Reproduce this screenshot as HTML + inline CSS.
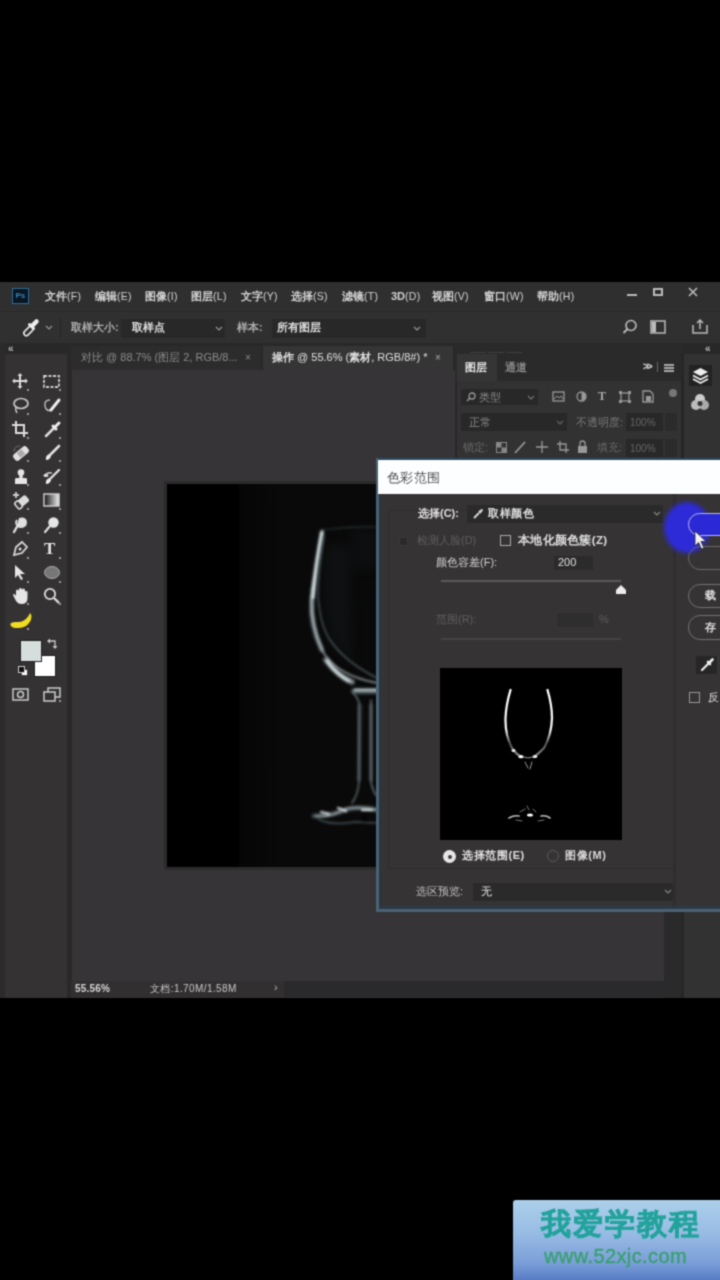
<!DOCTYPE html>
<html><head><meta charset="utf-8">
<style>
*{margin:0;padding:0;box-sizing:border-box}
html,body{width:720px;height:1280px;background:#000;overflow:hidden;font-family:"Liberation Sans",sans-serif;position:relative}
.a{position:absolute}
.t{position:absolute;white-space:nowrap;color:#cfcfcf;font-size:11px;line-height:13px;font-weight:500}
.d{color:#6a6a6a}
svg{position:absolute;overflow:visible}
#wrap{position:absolute;left:0;top:0;width:724px;height:1284px;filter:url(#soft)}
</style></head><body><svg width="0" height="0" style="position:absolute"><filter id="soft" x="0" y="0" width="100%" height="100%" color-interpolation-filters="sRGB"><feConvolveMatrix order="3" kernelMatrix="0.04 0.12 0.04 0.12 0.36 0.12 0.04 0.12 0.04" edgeMode="duplicate"/></filter></svg><div id="wrap">
<!-- ===== PS window ===== -->
<div class="a" style="left:0;top:282px;width:724px;height:716px;background:#313131"></div>
<!-- menu bar -->
<div class="a" style="left:0;top:282px;width:724px;height:30px;background:#2f2f2f"></div>
<div class="a" style="left:0;top:311px;width:724px;height:1px;background:#2a2a2a"></div>
<!-- ps logo -->
<div class="a" style="left:12px;top:288px;width:17px;height:16px;background:#0a1622;border:1.5px solid #2a6d98"></div>
<div class="t" style="left:15.5px;top:291px;font-size:8px;line-height:10px;color:#3584b8;font-weight:bold">Ps</div>
<div class="t" style="left:45px;top:290px;font-weight:bold;color:#d4d4d4">文件<span style="font-size:10.5px;font-weight:normal;letter-spacing:0.3px">(F)</span></div>
<div class="t" style="left:95px;top:290px;font-weight:bold;color:#d4d4d4">编辑<span style="font-size:10.5px;font-weight:normal;letter-spacing:0.3px">(E)</span></div>
<div class="t" style="left:145px;top:290px;font-weight:bold;color:#d4d4d4">图像<span style="font-size:10.5px;font-weight:normal;letter-spacing:0.3px">(I)</span></div>
<div class="t" style="left:191px;top:290px;font-weight:bold;color:#d4d4d4">图层<span style="font-size:10.5px;font-weight:normal;letter-spacing:0.3px">(L)</span></div>
<div class="t" style="left:241px;top:290px;font-weight:bold;color:#d4d4d4">文字<span style="font-size:10.5px;font-weight:normal;letter-spacing:0.3px">(Y)</span></div>
<div class="t" style="left:291px;top:290px;font-weight:bold;color:#d4d4d4">选择<span style="font-size:10.5px;font-weight:normal;letter-spacing:0.3px">(S)</span></div>
<div class="t" style="left:342px;top:290px;font-weight:bold;color:#d4d4d4">滤镜<span style="font-size:10.5px;font-weight:normal;letter-spacing:0.3px">(T)</span></div>
<div class="t" style="left:391px;top:290px;font-weight:bold;color:#d4d4d4">3D<span style="font-size:10.5px;font-weight:normal;letter-spacing:0.3px">(D)</span></div>
<div class="t" style="left:432px;top:290px;font-weight:bold;color:#d4d4d4">视图<span style="font-size:10.5px;font-weight:normal;letter-spacing:0.3px">(V)</span></div>
<div class="t" style="left:484px;top:290px;font-weight:bold;color:#d4d4d4">窗口<span style="font-size:10.5px;font-weight:normal;letter-spacing:0.3px">(W)</span></div>
<div class="t" style="left:537px;top:290px;font-weight:bold;color:#d4d4d4">帮助<span style="font-size:10.5px;font-weight:normal;letter-spacing:0.3px">(H)</span></div>
<!-- window controls -->
<div class="a" style="left:627px;top:294px;width:10px;height:2px;background:#bbb"></div>
<div class="a" style="left:653px;top:288px;width:10px;height:8px;border:2px solid #bbb"></div>
<svg style="left:688px;top:287px" width="10" height="10"><path d="M1 1L9 9M9 1L1 9" stroke="#bbb" stroke-width="1.6"/></svg>

<!-- options bar -->
<div class="a" style="left:0;top:312px;width:724px;height:31px;background:#303030"></div>
<svg style="left:20px;top:316px" width="22" height="22"><rect x="3" y="12.5" width="11" height="5" rx="2.5" transform="rotate(-45 8.5 15)" stroke="#e8e8e8" stroke-width="1.6" fill="none"/><path d="M12.5 9.5 L16.5 5.5" stroke="#eee" stroke-width="4.5" stroke-linecap="round"/><path d="M9.5 8.5 L13.5 12.5" stroke="#eee" stroke-width="3" stroke-linecap="round"/></svg>
<svg style="left:45px;top:325px" width="8" height="6"><path d="M1 1 L4 4 L7 1" stroke="#999" stroke-width="1.2" fill="none"/></svg>
<div class="a" style="left:60px;top:318px;width:1px;height:20px;background:#262626"></div>
<div class="t" style="left:71px;top:321px;color:#b0b0b0;font-weight:bold">取样大小:</div>
<div class="a" style="left:121px;top:319px;width:104px;height:19px;background:#282828"></div>
<div class="t" style="left:132px;top:321px;font-weight:bold;color:#e0e0e0">取样点</div>
<svg style="left:215px;top:326px" width="8" height="6"><path d="M1 1 L4 4 L7 1" stroke="#999" stroke-width="1.2" fill="none"/></svg>
<div class="t" style="left:237px;top:321px;color:#b0b0b0;font-weight:bold">样本:</div>
<div class="a" style="left:272px;top:319px;width:154px;height:19px;background:#282828"></div>
<div class="t" style="left:277px;top:321px;font-weight:bold;color:#e0e0e0">所有图层</div>
<svg style="left:413px;top:326px" width="8" height="6"><path d="M1 1 L4 4 L7 1" stroke="#999" stroke-width="1.2" fill="none"/></svg>
<svg style="left:622px;top:319px" width="16" height="16"><circle cx="9" cy="6.5" r="5" stroke="#bbb" stroke-width="1.6" fill="none"/><path d="M5.5 10 L1.5 14" stroke="#bbb" stroke-width="1.8"/></svg>
<svg style="left:650px;top:320px" width="16" height="14"><rect x="1" y="1" width="14" height="12" stroke="#bbb" stroke-width="1.5" fill="none"/><rect x="2" y="2" width="4" height="10" fill="#bbb"/></svg>
<svg style="left:692px;top:318px" width="16" height="17"><path d="M1 7 V15 H15 V7" stroke="#bbb" stroke-width="1.5" fill="none"/><path d="M8 11 V2 M5 5 L8 2 L11 5" stroke="#bbb" stroke-width="1.5" fill="none"/></svg>

<!-- panel header strip (<<) -->
<div class="a" style="left:0;top:343px;width:724px;height:27px;background:#282828"></div>
<div class="t" style="left:8px;top:342px;font-size:10px;color:#bbb;font-weight:bold">«</div>
<div class="t" style="left:705px;top:342px;font-size:10px;color:#bbb;font-weight:bold">«</div>

<!-- left gutter + tools panel -->
<div class="a" style="left:0;top:343px;width:5px;height:655px;background:#2c2b2c"></div>
<div class="a" style="left:5px;top:354px;width:63px;height:644px;background:#343233"></div>
<div class="a" style="left:67px;top:354px;width:5px;height:644px;background:#2a2829"></div>


<!-- tools icons -->
<svg style="left:0;top:0" width="1" height="1"></svg>
<svg style="left:12px;top:373px" width="16" height="16"><path d="M8 1V15M1 8H15" stroke="#ddd" stroke-width="2"/><path d="M8 0L5.5 3H10.5ZM8 16L5.5 13H10.5ZM0 8L3 5.5V10.5ZM16 8L13 5.5V10.5Z" fill="#ddd"/></svg>
<svg style="left:43px;top:375px" width="17" height="13"><rect x="1" y="1" width="15" height="11" stroke="#ccc" stroke-width="1.8" stroke-dasharray="3 1.5" fill="none"/></svg>
<svg style="left:12px;top:397px" width="17" height="17"><ellipse cx="9" cy="6.5" rx="7" ry="5" stroke="#ccc" stroke-width="1.7" fill="none"/><path d="M4 10 Q3 13 5 16" stroke="#ccc" stroke-width="1.5" fill="none"/></svg>
<svg style="left:43px;top:397px" width="18" height="17"><path d="M7 3 Q1 3 2 9 Q3 15 9 13" stroke="#bbb" stroke-width="1.5" fill="none"/><path d="M8 13 L16 3" stroke="#eee" stroke-width="3" stroke-linecap="round"/></svg>
<svg style="left:12px;top:421px" width="16" height="16"><path d="M4 0V12H16M0 4H12V16" stroke="#ddd" stroke-width="2" fill="none"/></svg>
<svg style="left:43px;top:420px" width="18" height="18"><path d="M3 16 L11 8" stroke="#ddd" stroke-width="2.5" stroke-linecap="round"/><path d="M10 6 L13 9 M12 7 L16 3" stroke="#eee" stroke-width="3" stroke-linecap="round"/></svg>
<svg style="left:12px;top:445px" width="18" height="17"><g transform="rotate(-40 9 8.5)"><rect x="0.5" y="4.5" width="17" height="8" rx="3" fill="#e0e0e0"/><rect x="6" y="5.5" width="6" height="6" fill="#aaa"/></g><path d="M2 6 Q3 1 8 1" stroke="#999" stroke-width="1" stroke-dasharray="1.5 1" fill="none"/></svg>
<svg style="left:43px;top:444px" width="18" height="18"><path d="M3 16 Q2 12 6 10 L8 12 Q7 16 3 16Z" fill="#eee"/><path d="M7 11 L16 2" stroke="#e0e0e0" stroke-width="2.6" stroke-linecap="round"/></svg>
<svg style="left:13px;top:468px" width="16" height="18"><circle cx="8" cy="4.5" r="3.3" fill="#e6e6e6"/><rect x="6.3" y="6" width="3.4" height="5" fill="#e6e6e6"/><path d="M2 11 Q2 10 4 10 H12 Q14 10 14 11 V16 H2Z" fill="#e6e6e6"/></svg>
<svg style="left:43px;top:468px" width="18" height="18"><path d="M3 16 Q2 12 6 10 L8 12 Q7 16 3 16Z" fill="#eee"/><path d="M7 11 L16 2" stroke="#e0e0e0" stroke-width="2.4" stroke-linecap="round"/><path d="M1 8 Q4 4 9 5" stroke="#ccc" stroke-width="1.5" fill="none"/><ellipse cx="3" cy="7.5" rx="2.5" ry="1.5" fill="#ddd"/></svg>
<svg style="left:11px;top:491px" width="19" height="18"><path d="M2 4 H8 M5 1 V7" stroke="#ccc" stroke-width="1.8"/><g transform="rotate(-40 11 11)"><rect x="4" y="7" width="14" height="8" rx="2" fill="#dcdcdc"/><rect x="4" y="7" width="5" height="8" rx="2" fill="#3a3a3a" stroke="#dcdcdc" stroke-width="1.6"/></g></svg>
<svg style="left:43px;top:493px" width="17" height="14"><defs><linearGradient id="gr"><stop offset="0" stop-color="#111"/><stop offset="1" stop-color="#eee"/></linearGradient></defs><rect x="1" y="1" width="15" height="12" fill="url(#gr)" stroke="#ccc" stroke-width="1.5"/></svg>
<svg style="left:12px;top:516px" width="17" height="17"><path d="M7 2 Q14 0 15 6 Q15 12 8 12 Q6 12 5 10 Z" fill="#e0e0e0"/><path d="M6 9 L2 16" stroke="#ddd" stroke-width="2.4" stroke-linecap="round"/><path d="M5 4 Q3 7 6 10" stroke="#e0e0e0" stroke-width="2" fill="none"/></svg>
<svg style="left:43px;top:516px" width="17" height="17"><circle cx="10.5" cy="6.5" r="5.2" fill="#e6e6e6"/><path d="M7 10 L2 16" stroke="#ddd" stroke-width="2.2" stroke-linecap="round"/></svg>
<svg style="left:12px;top:540px" width="17" height="17"><path d="M2 15 L4 7 L10 2 L15 7 L10 13 Z" stroke="#ddd" stroke-width="1.7" fill="none"/><circle cx="8" cy="9" r="1.5" fill="#ddd"/></svg>
<div class="t" style="left:44px;top:540px;font-size:17px;line-height:18px;color:#e6e6e6;font-weight:bold;font-family:'Liberation Serif',serif">T</div>
<svg style="left:13px;top:564px" width="15" height="17"><path d="M2 1 L2 14 L5 11 L8 16 L10 15 L7 10 L12 10 Z" fill="#e6e6e6"/></svg>
<svg style="left:43px;top:565px" width="18" height="15"><ellipse cx="9" cy="7.5" rx="7.5" ry="6" fill="#777" stroke="#aaa" stroke-width="1"/></svg>
<svg style="left:12px;top:587px" width="18" height="18"><path d="M4 9 V4 Q4 2.5 5.5 2.5 Q7 2.5 7 4 V8 V2.5 Q7 1 8.5 1 Q10 1 10 2.5 V8 V3 Q10 1.5 11.5 1.5 Q13 1.5 13 3 V9 V5 Q13 4 14.3 4 Q15.5 4 15.5 5 V11 Q15.5 17 9.5 17 Q5 17 3 12 L1 8 Q1.5 6.5 3 7.5 Z" fill="#e6e6e6"/></svg>
<svg style="left:43px;top:587px" width="17" height="17"><circle cx="7" cy="7" r="5.2" stroke="#ddd" stroke-width="1.8" fill="none"/><path d="M11 11 L16 16" stroke="#ddd" stroke-width="2.4"/></svg>
<svg style="left:9px;top:611px" width="24" height="18"><path d="M1.5 12.5 Q3 10.5 8 11 Q15 11.5 19.5 5 Q20.5 3 21 2 Q22.5 3 22.5 6 Q22 12 16 15.5 Q10 18 4 16.5 Q1 15 1.5 12.5Z" fill="#efdd22"/></svg>
<!-- swatches -->
<div class="a" style="left:34px;top:655px;width:22px;height:22px;background:#fff;border:1px solid #222"></div>
<div class="a" style="left:20px;top:640px;width:22px;height:22px;background:#d6dedd;border:1px solid #222"></div>
<svg style="left:47px;top:638px" width="11" height="11"><path d="M2 3 H8 V9" stroke="#ccc" stroke-width="1.3" fill="none"/><path d="M0 3 L3 0.5 V5.5Z M8 11 L5.5 8 H10.5Z" fill="#ccc"/></svg>
<div class="a" style="left:21px;top:669px;width:7px;height:7px;background:#fff;border:1px solid #444"></div>
<div class="a" style="left:18px;top:666px;width:7px;height:7px;background:#111;border:1px solid #ccc"></div>
<!-- quick mask / screen mode -->
<svg style="left:12px;top:688px" width="17" height="13"><rect x="1" y="1" width="15" height="11" stroke="#ccc" stroke-width="1.5" fill="none"/><circle cx="8.5" cy="6.5" r="3" stroke="#ccc" stroke-width="1.5" fill="none"/></svg>
<svg style="left:43px;top:687px" width="18" height="15"><rect x="5" y="1" width="12" height="9" stroke="#ccc" stroke-width="1.5" fill="none"/><rect x="1" y="5" width="11" height="9" stroke="#ccc" stroke-width="1.5" fill="#323232"/></svg>
<div class="a" style="left:27px;top:389px;width:2px;height:2px;background:#999"></div><div class="a" style="left:59px;top:389px;width:2px;height:2px;background:#999"></div><div class="a" style="left:27px;top:413px;width:2px;height:2px;background:#999"></div><div class="a" style="left:59px;top:413px;width:2px;height:2px;background:#999"></div><div class="a" style="left:27px;top:437px;width:2px;height:2px;background:#999"></div><div class="a" style="left:59px;top:437px;width:2px;height:2px;background:#999"></div><div class="a" style="left:27px;top:460px;width:2px;height:2px;background:#999"></div><div class="a" style="left:59px;top:460px;width:2px;height:2px;background:#999"></div><div class="a" style="left:27px;top:484px;width:2px;height:2px;background:#999"></div><div class="a" style="left:59px;top:484px;width:2px;height:2px;background:#999"></div><div class="a" style="left:27px;top:508px;width:2px;height:2px;background:#999"></div><div class="a" style="left:59px;top:508px;width:2px;height:2px;background:#999"></div><div class="a" style="left:27px;top:532px;width:2px;height:2px;background:#999"></div><div class="a" style="left:59px;top:532px;width:2px;height:2px;background:#999"></div><div class="a" style="left:27px;top:557px;width:2px;height:2px;background:#999"></div><div class="a" style="left:59px;top:557px;width:2px;height:2px;background:#999"></div><div class="a" style="left:27px;top:581px;width:2px;height:2px;background:#999"></div><div class="a" style="left:59px;top:581px;width:2px;height:2px;background:#999"></div><div class="a" style="left:27px;top:603px;width:2px;height:2px;background:#999"></div><div class="a" style="left:59px;top:603px;width:2px;height:2px;background:#999"></div><div class="a" style="left:27px;top:628px;width:2px;height:2px;background:#999"></div><div class="a" style="left:59px;top:700px;width:2px;height:2px;background:#999"></div>
<!-- tabs -->
<div class="a" style="left:71px;top:346px;width:190px;height:24px;background:#2c2c2c"></div>
<div class="t" style="left:81px;top:351px;color:#8c8c8c">对比 @ 88.7% (图层 2, RGB/8...</div>
<div class="t" style="left:245px;top:351px;color:#8c8c8c;font-size:10px">×</div>
<div class="a" style="left:263px;top:346px;width:190px;height:24px;background:#353535"></div>
<div class="t" style="left:272px;top:351px;color:#e0e0e0"><b>操作</b> @ 55.6% (<b>素材</b>, RGB/8#) *</div>
<div class="t" style="left:435px;top:351px;color:#aaa;font-size:10px">×</div>

<!-- canvas -->
<div class="a" style="left:72px;top:370px;width:592px;height:611px;background:#363436"></div>
<!-- vertical scrollbar area -->
<div class="a" style="left:664px;top:370px;width:17px;height:628px;background:#2a2a2a"></div>
<div class="a" style="left:681px;top:354px;width:3px;height:644px;background:#262626"></div>
<!-- right icon dock -->
<div class="a" style="left:684px;top:354px;width:40px;height:644px;background:#323232"></div>
<!-- status bar -->
<div class="a" style="left:71px;top:981px;width:213px;height:16px;background:#322f31"></div>
<div class="a" style="left:284px;top:981px;width:380px;height:16px;background:#2a292b"></div>
<div class="t" style="left:75px;top:982px;font-size:10px;font-weight:bold;color:#d6d6d6;letter-spacing:0.2px">55.56%</div>
<div class="t" style="left:150px;top:982px;font-size:10px;color:#c8c8c8;letter-spacing:0.4px">文档:1.70M/1.58M</div>
<div class="t" style="left:274px;top:981px;font-size:11px;color:#bbb">›</div>

<!-- document image -->
<div class="a" style="left:164px;top:481px;width:220px;height:389px;background:#2c2b2c"></div>
<div class="a" style="left:167px;top:484px;width:215px;height:383px;background:#000"></div>
<div class="a" style="left:239px;top:484px;width:143px;height:383px;background:linear-gradient(90deg,#050505,#090909 30%,#090909)"></div>


<!-- layers panel -->
<div class="a" style="left:455px;top:344px;width:226px;height:130px;background:#2a2a2a"></div>
<div class="t" style="left:470px;top:345px;font-size:8px;color:#555">—— ——  ——</div>
<div class="a" style="left:456px;top:354px;width:225px;height:120px;background:#323232;border-left:1px solid #262626"></div>
<div class="a" style="left:456px;top:354px;width:225px;height:27px;background:#2a2a2a"></div>
<div class="a" style="left:457px;top:354px;width:40px;height:27px;background:#353535"></div>
<div class="t" style="left:465px;top:361px;color:#e6e6e6;font-weight:bold">图层</div>
<div class="t" style="left:505px;top:361px;color:#8a8a8a;font-weight:bold">通道</div>
<div class="t" style="left:643px;top:360px;color:#ddd;font-size:10px;font-weight:bold;letter-spacing:-2px">&gt;&gt;</div>
<div class="a" style="left:657px;top:362px;width:1px;height:10px;background:#666"></div>
<div class="a" style="left:664px;top:364px;width:10px;height:1.5px;background:#aaa"></div>
<div class="a" style="left:664px;top:367px;width:10px;height:1.5px;background:#aaa"></div>
<div class="a" style="left:664px;top:370px;width:10px;height:1.5px;background:#aaa"></div>
<div class="a" style="left:461px;top:389px;width:77px;height:16px;background:#282828"></div>
<svg style="left:466px;top:392px" width="10" height="10"><circle cx="6" cy="4" r="3" stroke="#999" stroke-width="1.3" fill="none"/><path d="M4 6 L1 9" stroke="#999" stroke-width="1.4"/></svg>
<div class="t" style="left:479px;top:391px;color:#8a8a8a">类型</div>
<svg style="left:527px;top:395px" width="8" height="6"><path d="M1 1 L4 4 L7 1" stroke="#777" stroke-width="1.1" fill="none"/></svg>
<svg style="left:552px;top:391px" width="13" height="11"><rect x="1" y="1" width="11" height="9" stroke="#999" stroke-width="1.3" fill="none"/><path d="M2 8 L5 5 L7 7 L9 5 L11 8" stroke="#999" stroke-width="1" fill="none"/></svg>
<svg style="left:576px;top:391px" width="11" height="11"><circle cx="5.5" cy="5.5" r="4.5" stroke="#999" stroke-width="1.3" fill="none"/><path d="M5.5 1 A4.5 4.5 0 0 1 5.5 10Z" fill="#999"/></svg>
<div class="t" style="left:598px;top:390px;color:#aaa;font-size:12px;font-weight:bold;font-family:'Liberation Serif',serif">T</div>
<svg style="left:619px;top:391px" width="12" height="12"><rect x="2" y="2" width="8" height="8" stroke="#999" stroke-width="1.3" fill="none"/><rect x="0" y="0" width="3" height="3" fill="#999"/><rect x="9" y="0" width="3" height="3" fill="#999"/><rect x="0" y="9" width="3" height="3" fill="#999"/><rect x="9" y="9" width="3" height="3" fill="#999"/></svg>
<svg style="left:642px;top:390px" width="12" height="13"><path d="M1 1 H8 L11 4 V12 H1Z" stroke="#999" stroke-width="1.3" fill="none"/><rect x="4" y="6" width="5" height="5" fill="#999"/></svg>
<div class="a" style="left:669px;top:389px;width:8px;height:8px;border-radius:4px;background:#777"></div>
<div class="a" style="left:461px;top:413px;width:106px;height:18px;background:#282828"></div>
<div class="t" style="left:469px;top:416px;color:#8a8a8a">正常</div>
<svg style="left:556px;top:420px" width="8" height="6"><path d="M1 1 L4 4 L7 1" stroke="#666" stroke-width="1.1" fill="none"/></svg>
<div class="t" style="left:576px;top:416px;color:#777">不透明度:</div>
<div class="a" style="left:626px;top:413px;width:37px;height:18px;background:#282828"></div>
<div class="t" style="left:630px;top:416px;color:#666;font-size:10px">100%</div>
<div class="a" style="left:665px;top:413px;width:12px;height:18px;background:#2b2b2b"></div>
<div class="t" style="left:463px;top:441px;color:#6a6a6a">锁定:</div>
<svg style="left:496px;top:442px" width="11" height="11"><rect x="0.5" y="0.5" width="10" height="10" stroke="#888" fill="none"/><rect x="1" y="1" width="4.5" height="4.5" fill="#888"/><rect x="5.5" y="5.5" width="4.5" height="4.5" fill="#888"/></svg>
<svg style="left:514px;top:441px" width="12" height="13"><path d="M1 12 L11 1" stroke="#999" stroke-width="1.8"/></svg>
<svg style="left:536px;top:441px" width="12" height="12"><path d="M6 0V12M0 6H12" stroke="#999" stroke-width="1.3"/></svg>
<svg style="left:557px;top:441px" width="12" height="12"><path d="M3 0V9H12M0 3H9V12" stroke="#999" stroke-width="1.3" fill="none"/></svg>
<svg style="left:577px;top:440px" width="11" height="13"><path d="M3 6V3.5A2.5 2.5 0 0 1 8 3.5V6" stroke="#999" stroke-width="1.3" fill="none"/><rect x="1" y="6" width="9" height="7" fill="#999"/></svg>
<div class="t" style="left:597px;top:441px;color:#6a6a6a">填充:</div>
<div class="a" style="left:626px;top:439px;width:37px;height:18px;background:#282828"></div>
<div class="t" style="left:630px;top:442px;color:#666;font-size:10px">100%</div>
<div class="a" style="left:665px;top:439px;width:12px;height:18px;background:#2b2b2b"></div>

<!-- right dock icons -->
<div class="a" style="left:689px;top:365px;width:23px;height:21px;background:#222"></div>
<svg style="left:692px;top:367px" width="17" height="17"><path d="M8.5 1 L16 5 L8.5 9 L1 5Z" fill="#eee"/><path d="M1 8.5 L8.5 12.5 L16 8.5 M1 12 L8.5 16 L16 12" stroke="#eee" stroke-width="1.8" fill="none"/></svg>
<svg style="left:690px;top:393px" width="20" height="18"><circle cx="10" cy="6" r="5" fill="#ccc"/><circle cx="6" cy="12" r="5" fill="#bbb"/><circle cx="14" cy="12" r="5" fill="#aaa"/><circle cx="10" cy="10.5" r="2.5" fill="#333"/></svg>

<!-- glass in document -->
<svg style="left:167px;top:484px" width="210" height="383" viewBox="167 484 210 383">
 <defs>
  <filter id="bl" x="-20%" y="-20%" width="140%" height="140%" color-interpolation-filters="sRGB"><feGaussianBlur stdDeviation="0.8"/></filter>
  <filter id="bl2" x="-50%" y="-50%" width="200%" height="200%" color-interpolation-filters="sRGB"><feGaussianBlur stdDeviation="4"/></filter>
  <filter id="bl4" x="-30%" y="-30%" width="160%" height="160%" color-interpolation-filters="sRGB"><feGaussianBlur stdDeviation="1.8"/></filter>
 </defs>
 <g filter="url(#bl2)">
  <path d="M326 545 Q320 600 330 635 Q340 655 352 662 L350 545Z" fill="#0e1011"/>
  <rect x="352" y="529" width="25" height="40" fill="#0c0e0f"/>
 </g>
 <g filter="url(#bl4)" fill="none" stroke-linecap="round">
  <path d="M322 532 Q316 565 312 600 Q310 625 322 650" stroke="#7f8c90" stroke-width="4"/>
  <path d="M326 660 Q338 676 352 682" stroke="#8d999d" stroke-width="5"/>
  <path d="M354 691 L377 691" stroke="#6a767a" stroke-width="5"/>
  <path d="M314 816 Q332 816 348 809 Q362 806 377 810" stroke="#5a6569" stroke-width="4"/>
  <path d="M360 705 L359 780 M371 705 L371 780" stroke="#3c4649" stroke-width="3"/>
 </g>
 <g filter="url(#bl)" fill="none" stroke-linecap="round">
  <path d="M322 531 Q317 560 312 590 Q309 620 322 650 Q335 675 377 683" stroke="#a4afb3" stroke-width="1.6"/>
  <path d="M322 532 Q316 560 313 598" stroke="#e8f0f2" stroke-width="2"/>
  <path d="M324 536 Q318 570 318 596 Q320 625 330 640 Q345 662 377 678" stroke="#4a575c" stroke-width="1.5"/>
  <path d="M322 530 Q350 526 377 527" stroke="#2c3437" stroke-width="1.2"/>
  <path d="M327 661 Q336 674 349 681" stroke="#d5dee1" stroke-width="2.2"/>
  <path d="M355 690 L377 690" stroke="#b5c0c4" stroke-width="2"/>
  <path d="M353 692 Q357 697 359 702 L359 782 Q358 795 352 803" stroke="#6a767b" stroke-width="1.4"/>
  <path d="M371 700 L371 782 Q373 792 377 796" stroke="#707d83" stroke-width="1.4"/>
  <path d="M316 816 Q330 818 345 809 Q360 806 377 810" stroke="#8f9a9e" stroke-width="1.5"/>
  <path d="M318 819 Q332 826 355 822 L377 823" stroke="#48545a" stroke-width="1.6"/>
  <path d="M321 812 L329 814 M338 808 L346 811 M362 810 L372 810" stroke="#dae3e6" stroke-width="2.2"/>
  <rect x="362" y="816" width="6" height="6" fill="#050505" stroke="none"/>
 </g>
</svg>

<!-- ===== dialog ===== -->
<div class="a" style="left:376px;top:458px;width:348px;height:454px;background:#4a6274"></div>
<div class="a" style="left:378px;top:458px;width:346px;height:2px;background:#2c4a62"></div>
<div class="a" style="left:378px;top:460px;width:346px;height:34px;background:#fcfeff"></div>
<div class="t" style="left:387px;top:470px;font-size:13px;line-height:15px;color:#4e4e4e;letter-spacing:0.3px">色彩范围</div>
<div class="a" style="left:379px;top:494px;width:345px;height:415px;background:#363334;border-left:2px solid #2a3641;border-bottom:3px solid #2c3a44"></div>
<!-- group box -->
<div class="a" style="left:388px;top:510px;width:286px;height:359px;border:1px solid #2e2d2f"></div>
<div class="t" style="left:418px;top:507px;color:#e0e0e0;font-weight:bold">选择(C):</div>
<div class="a" style="left:467px;top:505px;width:196px;height:18px;background:#2a2a2a"></div>
<svg style="left:472px;top:508px" width="12" height="12"><path d="M2 10 L7 5" stroke="#ddd" stroke-width="1.8"/><path d="M7 3 L9 5 M8 4 L10.5 1.5" stroke="#ddd" stroke-width="2"/></svg>
<div class="t" style="left:488px;top:507px;color:#e0e0e0;font-weight:bold;letter-spacing:0.5px">取样颜色</div>
<svg style="left:653px;top:511px" width="8" height="6"><path d="M1 1 L4 4 L7 1" stroke="#888" stroke-width="1.1" fill="none"/></svg>
<div class="a" style="left:399px;top:537px;width:9px;height:9px;background:#2a2a2a;border:1px solid #3a3a3a"></div>
<div class="t" style="left:417px;top:534px;color:#5e5e5e">检测人脸(D)</div>
<div class="a" style="left:500px;top:535px;width:11px;height:11px;border:1px solid #aaa"></div>
<div class="t" style="left:518px;top:534px;color:#e0e0e0;font-size:11.5px;font-weight:bold;letter-spacing:0.3px">本地化颜色簇(Z)</div>
<div class="t" style="left:436px;top:556px;color:#cfcfcf">颜色容差(F):</div>
<div class="a" style="left:554px;top:556px;width:39px;height:14px;background:#2b2b2b"></div>
<div class="t" style="left:558px;top:556px;color:#e0e0e0">200</div>
<div class="a" style="left:441px;top:580px;width:180px;height:2px;background:#5a5a5a"></div>
<svg style="left:615px;top:585px" width="12" height="9"><path d="M6 0 L11 5 V9 H1 V5Z" fill="#eee"/></svg>
<div class="t" style="left:436px;top:613px;color:#5e5e5e">范围(R):</div>
<div class="a" style="left:557px;top:613px;width:36px;height:14px;background:#2e2e2e"></div>
<div class="t" style="left:599px;top:613px;color:#5e5e5e">%</div>
<div class="a" style="left:441px;top:638px;width:180px;height:2px;background:#444"></div>
<!-- preview -->
<div class="a" style="left:440px;top:668px;width:182px;height:172px;background:#000"></div>
<svg style="left:440px;top:668px" width="182" height="172" viewBox="440 668 182 172">
 <defs><filter id="bl3" x="-20%" y="-20%" width="140%" height="140%" color-interpolation-filters="sRGB"><feGaussianBlur stdDeviation="0.7"/></filter>
 <linearGradient id="lg1" x1="0" y1="0" x2="0" y2="1"><stop offset="0" stop-color="#fff"/><stop offset="0.6" stop-color="#f0f0f0"/><stop offset="0.8" stop-color="#4a4a4a"/><stop offset="1" stop-color="#909090"/></linearGradient></defs>
 <g filter="url(#bl3)" fill="none" stroke-linecap="round">
  <path d="M510.5 690 Q506 705 505.5 718 Q505 735 512 748 Q516 754 521 757" stroke="url(#lg1)" stroke-width="2.3"/>
  <path d="M547.5 690 Q552 705 552 718 Q551.5 735 544 748 Q538 754 534 757" stroke="url(#lg1)" stroke-width="2.3"/>
  <ellipse cx="513.5" cy="750.5" rx="2" ry="1.6" fill="#eee" stroke="none"/>
  <ellipse cx="521" cy="756.7" rx="2.6" ry="1.6" fill="#fff" stroke="none"/>
  <ellipse cx="535" cy="756.5" rx="2.4" ry="1.5" fill="#eee" stroke="none"/>
  <path d="M523 757 Q528 759 533 757" stroke="#999" stroke-width="1"/>
  <path d="M525 762 L528 768 M532 762 L530 769" stroke="#999" stroke-width="1"/>
  <ellipse cx="530" cy="815" rx="3" ry="1.6" fill="#fff" stroke="none"/>
  <path d="M509 818 Q514 815 519 816 M541 816 Q546 815 550 818" stroke="#bbb" stroke-width="1.6"/>
  <path d="M520 812 L525 809 M536 812 L533 809 M516 820 L522 821 M538 821 L544 820 M527 806 L529 810" stroke="#777" stroke-width="1"/>
 </g>
</svg>
<!-- radios -->
<div class="a" style="left:443px;top:850px;width:13px;height:13px;border-radius:50%;background:#e6e6e6"></div>
<div class="a" style="left:447.5px;top:854.5px;width:4px;height:4px;border-radius:50%;background:#3a3a3a"></div>
<div class="t" style="left:462px;top:849px;color:#e0e0e0;font-weight:bold;letter-spacing:0.6px">选择范围(E)</div>
<div class="a" style="left:547px;top:850px;width:12px;height:12px;border-radius:50%;border:1.5px solid #5a5a5a"></div>
<div class="t" style="left:565px;top:849px;color:#d8d8d8;font-weight:bold;letter-spacing:0.6px">图像(M)</div>
<div class="t" style="left:416px;top:885px;color:#bdbdbd">选区预览:</div>
<div class="a" style="left:473px;top:883px;width:201px;height:18px;background:#2a2a2a"></div>
<div class="t" style="left:481px;top:885px;color:#e0e0e0">无</div>
<svg style="left:664px;top:889px" width="8" height="6"><path d="M1 1 L4 4 L7 1" stroke="#888" stroke-width="1.1" fill="none"/></svg>
<!-- right column of dialog -->
<div class="a" style="left:673px;top:494px;width:3px;height:412px;background:#2e2d2f"></div>
<div class="a" style="left:664px;top:502px;width:46px;height:51px;border-radius:50%;background:#2d2bd8;filter:blur(2px)"></div>
<div class="a" style="left:690px;top:514px;width:40px;height:21px;background:#2b29d6"></div>

<div class="a" style="left:688px;top:513px;width:50px;height:23px;border-radius:12px;border:1.5px solid #b8b8e8"></div>
<div class="a" style="left:688px;top:546px;width:50px;height:24px;border-radius:12px;border:1.5px solid #6a6a6a"></div>
<div class="a" style="left:688px;top:584px;width:50px;height:24px;border-radius:12px;border:1.5px solid #727272"></div>
<div class="t" style="left:705px;top:589px;color:#ddd;font-weight:bold">载</div>
<div class="a" style="left:688px;top:615px;width:50px;height:25px;border-radius:12px;border:1.5px solid #727272"></div>
<div class="t" style="left:705px;top:621px;color:#ddd;font-weight:bold">存</div>
<div class="a" style="left:696px;top:656px;width:21px;height:18px;background:#262626"></div>
<svg style="left:699px;top:657px" width="16" height="16"><path d="M3 13 L9 7" stroke="#eee" stroke-width="2.2" stroke-linecap="round"/><path d="M9 5 L11 7 M10 6 L13.5 2.5" stroke="#eee" stroke-width="2.6" stroke-linecap="round"/></svg>
<div class="a" style="left:689px;top:692px;width:11px;height:11px;border:1px solid #999"></div>
<div class="t" style="left:708px;top:691px;color:#ddd">反</div>
<!-- blue dot + cursor -->
<svg style="left:694px;top:530px" width="14" height="20"><path d="M1 1 V16 L4.5 12.5 L7.5 19 L10 18 L7 11.5 L12 11.5 Z" fill="#f4f4f4" stroke="#222" stroke-width="0.8"/></svg>

<!-- ===== watermark ===== -->
<div class="a" style="left:513px;top:1200px;width:211px;height:84px;border-top-left-radius:3px;background:linear-gradient(180deg,#acd0ea 0%,#98bbe4 40%,#7a9ed8 75%,#4f74c0 100%)"></div>
<div class="t" style="left:541px;top:1206px;font-size:30px;line-height:36px;font-weight:900;color:#22a39c;letter-spacing:2px;-webkit-text-stroke:0.6px #22a39c">我爱学教程</div>
<div class="t" style="left:544px;top:1244px;font-size:20px;line-height:24px;font-weight:normal;color:#38a070;letter-spacing:0.4px;-webkit-text-stroke:0.4px #38a070">www.52xjc.com</div>
</div></body></html>
